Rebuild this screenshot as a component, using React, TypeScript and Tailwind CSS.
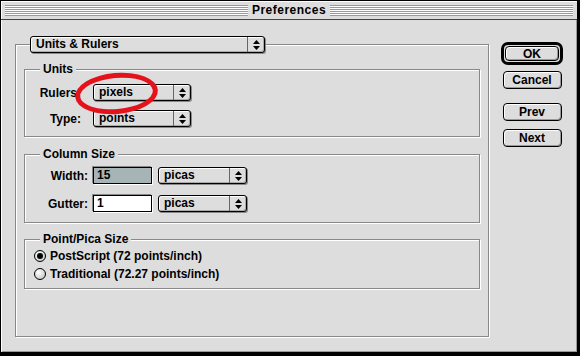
import React from "react";

const font = { fontFamily: '"Liberation Sans", Arial, sans-serif' };

function Arrows() {
  return (
    <svg width="7" height="10" viewBox="0 0 7 10">
      <path d="M3.5 0 L7 4 L0 4 Z" fill="#000" />
      <path d="M0 6 L7 6 L3.5 10 Z" fill="#000" />
    </svg>
  );
}

function Popup({ label, className }: { label: string; className: string }) {
  return (
    <div
      className={`flex h-[17px] shrink-0 rounded-[3px] border border-black bg-[#dddddd] shadow-[1px_1px_0_#888,inset_1px_1px_0_#fff,inset_-1px_-1px_0_#aaa] ${className}`}
    >
      <div className="flex-1 pl-[5px] leading-[15px]">{label}</div>
      <div className="flex w-[17px] items-center justify-center border-l border-[#666]">
        <Arrows />
      </div>
    </div>
  );
}

function Group({
  title,
  className,
  children,
}: {
  title: string;
  className?: string;
  children: React.ReactNode;
}) {
  return (
    <div
      className={`mx-[8px] border border-[#888] shadow-[1px_1px_0_#fff,inset_1px_1px_0_#fff] ${className ?? ""}`}
    >
      <div className="-mt-[8px] ml-[15px] h-[15px] w-fit bg-[#dddddd] px-[3px] leading-[15px]">
        {title}
      </div>
      {children}
    </div>
  );
}

function Field({ value, selected }: { value: string; selected?: boolean }) {
  return (
    <div
      className={`h-[17px] w-[59px] shrink-0 border border-black pl-[3px] leading-[15px] shadow-[-1px_-1px_0_#888,1px_1px_0_#fff] ${
        selected ? "bg-[#a7b4b6]" : "bg-white"
      }`}
    >
      {value}
    </div>
  );
}

function Radio({ on, label }: { on?: boolean; label: string }) {
  return (
    <div className="flex h-[18px] items-center gap-[4px] pl-[9px]">
      <div className="flex h-[12px] w-[12px] items-center justify-center rounded-full border border-black bg-[radial-gradient(circle_at_35%_35%,#fff,#bbb)]">
        {on && <div className="h-[6px] w-[6px] rounded-full bg-black" />}
      </div>
      <span>{label}</span>
    </div>
  );
}

function Button({ label }: { label: string }) {
  return (
    <div className="flex h-[18px] w-[59px] items-center justify-center rounded-[4px] border border-black bg-[#dddddd] leading-none shadow-[inset_1px_1px_0_#fff,inset_-1px_-1px_0_#999]">
      {label}
    </div>
  );
}

export default function App() {
  return (
    <div
      className="relative h-[356px] w-[580px] bg-black pb-[4px] pl-[1px] pr-[3px] pt-[1px] text-[12px] font-bold text-black"
      style={font}
    >
      <div className="flex h-full w-full flex-col bg-[#dddddd]">
        <div className="flex h-[19px] shrink-0 items-center gap-[4px] border-b border-[#444] px-[4px] shadow-[inset_1px_1px_0_#fff]">
          <div className="h-[11px] flex-1 bg-[repeating-linear-gradient(to_bottom,#999_0px,#999_1px,#fff_1px,#fff_2px)]" />
          <div className="tracking-[0.5px]">Preferences</div>
          <div className="h-[11px] flex-1 bg-[repeating-linear-gradient(to_bottom,#999_0px,#999_1px,#fff_1px,#fff_2px)]" />
        </div>
        <div className="flex flex-1 items-start pl-[14px] shadow-[inset_1px_0_0_#fff,inset_-1px_-1px_0_#999]">
          <div className="mt-[24px] w-[474px] border border-[#888] pb-[47px] shadow-[1px_1px_0_#fff,inset_1px_1px_0_#fff]">
            <Popup label="Units & Rulers" className="-mt-[9px] ml-[14px] w-[235px]" />

            <Group title="Units" className="mt-[16px] pb-[9px]">
              <div className="mt-[7px] flex h-[17px] items-center">
                <div className="w-[56px] text-right">Rulers:</div>
                <Popup label="pixels" className="ml-[12px] w-[98px]" />
              </div>
              <div className="mt-[9px] flex h-[17px] items-center">
                <div className="w-[56px] text-right">Type:</div>
                <Popup label="points" className="ml-[12px] w-[98px]" />
              </div>
            </Group>

            <Group title="Column Size" className="mt-[17px] pb-[10px]">
              <div className="mt-[5px] flex h-[17px] items-center">
                <div className="w-[63px] text-right">Width:</div>
                <div className="ml-[5px]">
                  <Field value="15" selected />
                </div>
                <Popup label="picas" className="ml-[6px] w-[89px]" />
              </div>
              <div className="mt-[11px] flex h-[17px] items-center">
                <div className="w-[63px] text-right">Gutter:</div>
                <div className="ml-[5px]">
                  <Field value="1" />
                </div>
                <Popup label="picas" className="ml-[6px] w-[89px]" />
              </div>
            </Group>

            <Group title="Point/Pica Size" className="mt-[16px] pb-[5px]">
              <Radio on label="PostScript (72 points/inch)" />
              <Radio label="Traditional (72.27 points/inch)" />
            </Group>
          </div>

          <div className="ml-[12px] mt-[22px] flex flex-col items-center">
            <div className="rounded-[7px] border-[3px] border-black p-[1px]">
              <div className="flex h-[15px] w-[54px] items-center justify-center rounded-[4px] border border-black bg-[#dddddd] leading-none shadow-[inset_1px_1px_0_#fff,inset_-1px_-1px_0_#999]">
                OK
              </div>
            </div>
            <div className="mt-[6px]">
              <Button label="Cancel" />
            </div>
            <div className="mt-[14px]">
              <Button label="Prev" />
            </div>
            <div className="mt-[8px]">
              <Button label="Next" />
            </div>
          </div>
        </div>
      </div>

      <div className="absolute left-[75px] top-[73px] h-[41px] w-[83px] rotate-[-5deg] rounded-[50%] border-[5px] border-[#e4121b]" />
    </div>
  );
}
